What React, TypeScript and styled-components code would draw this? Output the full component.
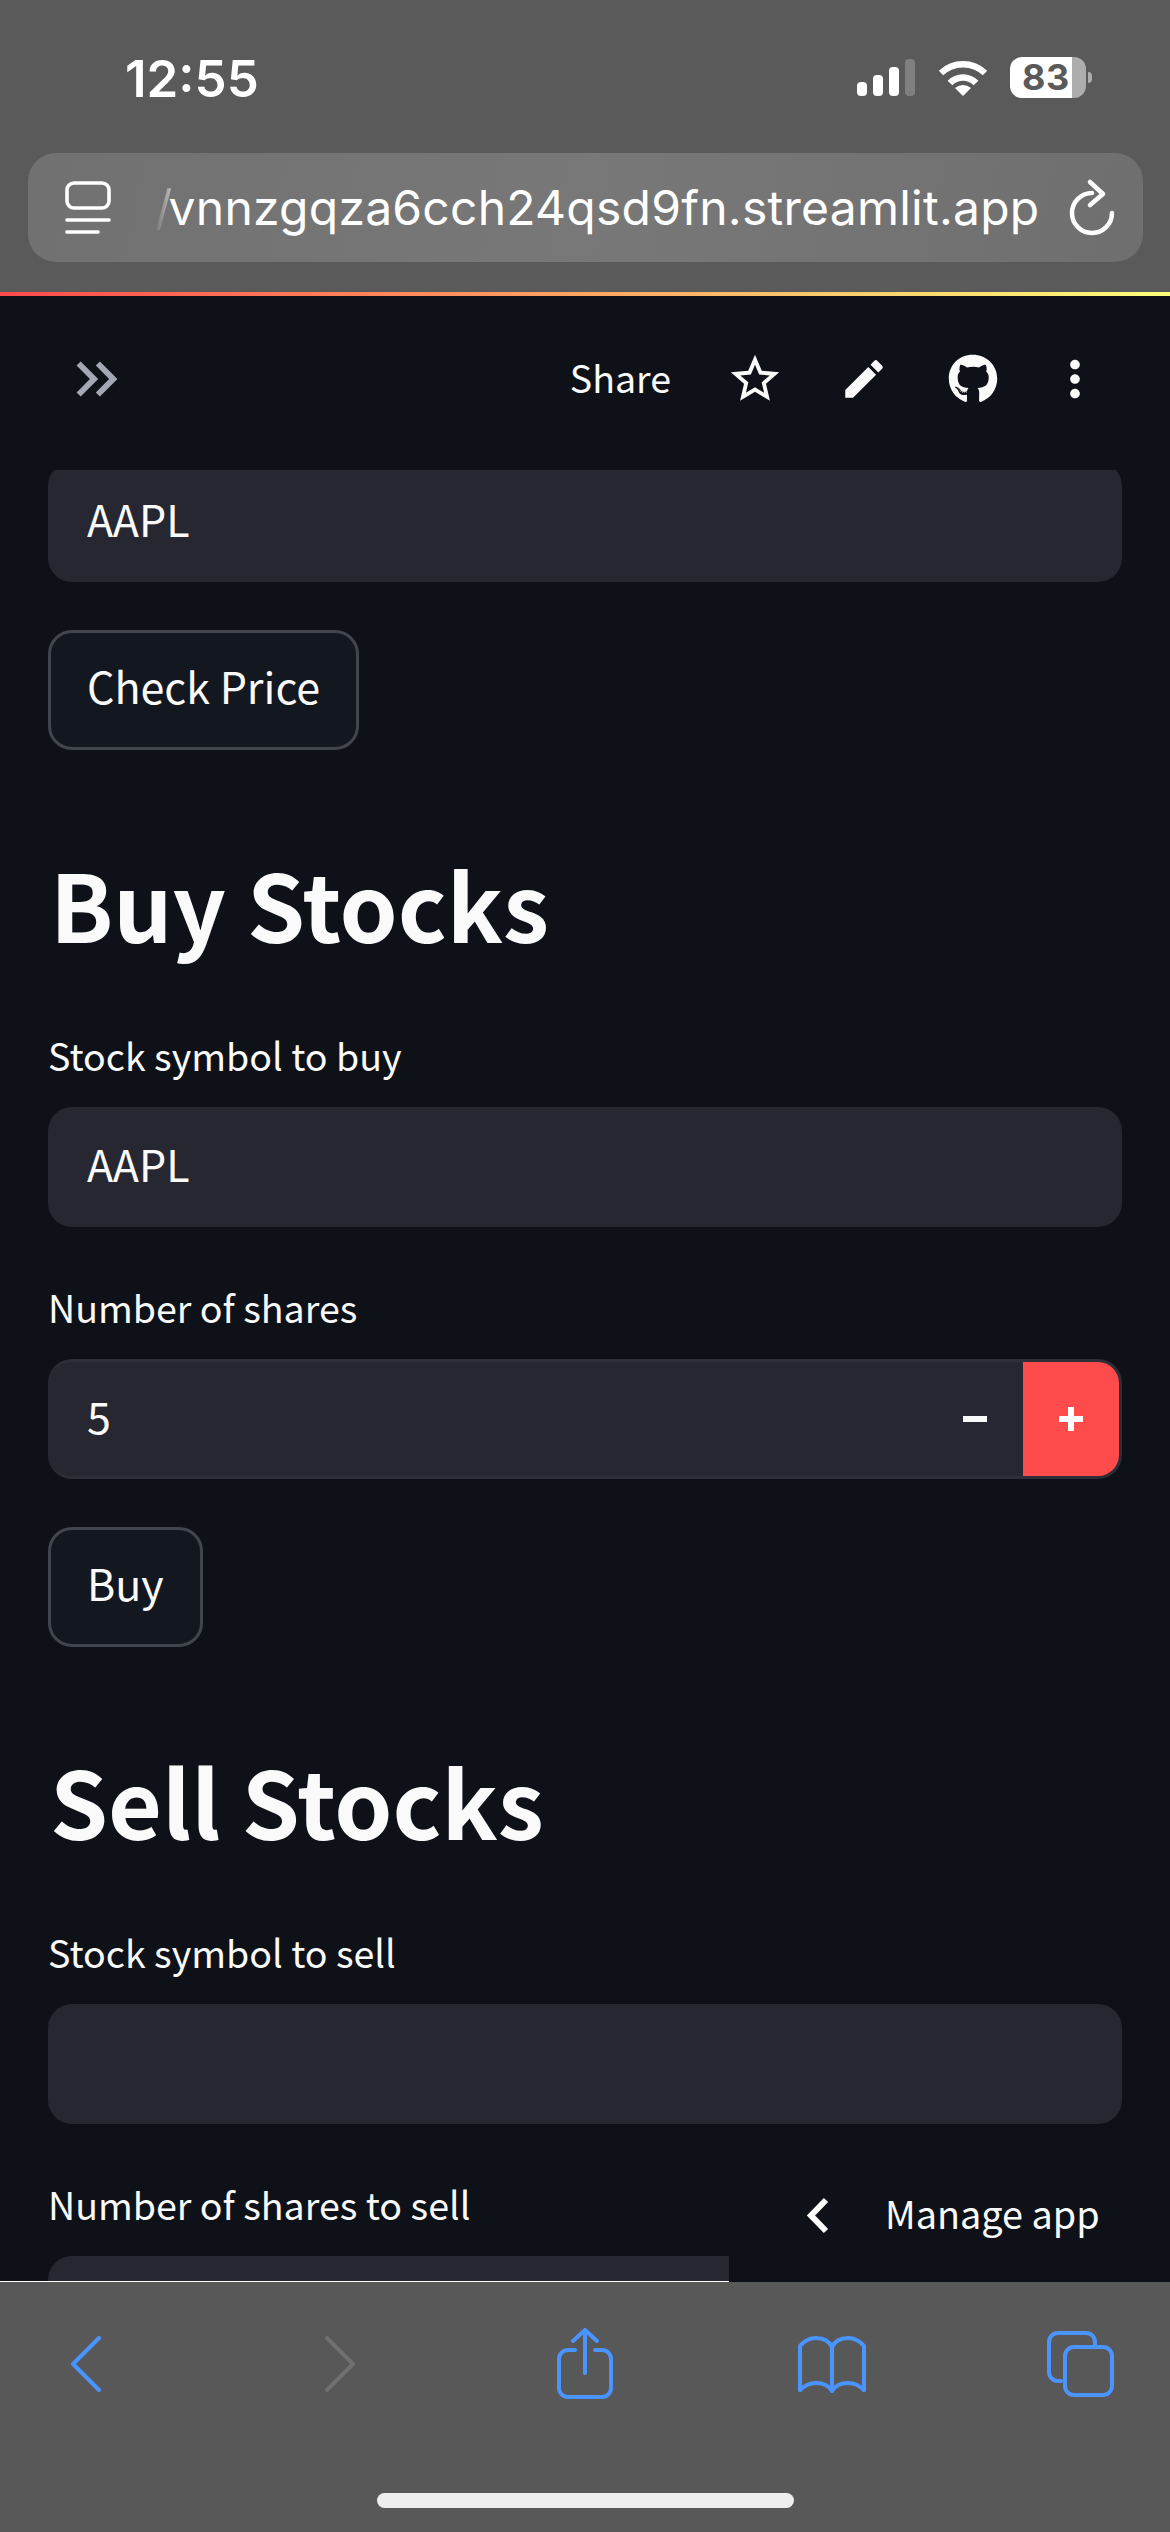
import React from "react";
import styled, { createGlobalStyle } from "styled-components";
import { MdEdit, MdKeyboardDoubleArrowRight, MdMoreVert, MdStarBorder } from "react-icons/md";
import { FaGithub } from "react-icons/fa";

const GlobalStyle = createGlobalStyle`
  html, body { margin: 0; padding: 0; background: #0e1117; }
  * { box-sizing: border-box; }
`;

const Page = styled.div`
  width: 1170px;
  height: 2532px;
  display: flex;
  flex-direction: column;
  overflow: hidden;
  background: #0e1117;
  color: #fafafa;
  font-family: "Noto Sans CJK JP", "Liberation Sans", sans-serif;
`;

const BrowserTop = styled.header`
  flex: none;
  height: 292px;
  background: #5a5a5a;
  font-family: Inter, "Liberation Sans", sans-serif;
  color: #fff;
`;

const StatusBar = styled.div`
  height: 153px;
  padding: 57px 84px 0 125px;
  display: flex;
  justify-content: space-between;
  align-items: flex-start;
`;

const Clock = styled.div`
  margin-top: 1px;
  font-size: 51px;
  line-height: 41px;
  font-weight: 600;
`;

const StatusIcons = styled.div`
  display: flex;
  align-items: center;
  height: 41px;
`;

const SignalIcon = styled.svg`
  width: 58px;
  height: 37px;
  margin-right: 23px;
`;

const WifiIcon = styled.svg`
  width: 50px;
  height: 37px;
  margin-right: 22px;
`;

const Battery = styled.div`
  position: relative;
  width: 76px;
  height: 41px;
  border-radius: 12px;
  background: linear-gradient(90deg, #fff 0 62px, #adadad 62px);
  color: #5a5a5a;
  font-size: 36px;
  font-weight: 700;
  line-height: 41px;
  padding-left: 12px;
  letter-spacing: 0.5px;
  &::after {
    content: "";
    position: absolute;
    left: 78px;
    top: 15px;
    width: 4px;
    height: 11px;
    border-radius: 0 6px 6px 0;
    background: #adadad;
  }
`;

const AddressBar = styled.div`
  height: 109px;
  margin: 0 27px 0 28px;
  border-radius: 28px;
  background: linear-gradient(100deg, #717171, #787878 50%, #6f6f6f);
  display: flex;
  align-items: center;
  padding: 0 26px 0 37px;
`;

const SiteIcon = styled.svg`
  width: 46px;
  height: 54px;
  margin-right: 44px;
  flex: none;
`;

const Url = styled.div`
  flex: 1;
  white-space: nowrap;
  font-size: 48px;
  line-height: 60px;
  letter-spacing: 0.25px;
`;

const UrlFade = styled.span`
  margin-right: -4px;
  background: linear-gradient(90deg, rgba(255,255,255,0.03), rgba(255,255,255,0.55));
  -webkit-background-clip: text;
  background-clip: text;
  color: transparent;
`;

const ReloadIcon = styled.svg`
  width: 50px;
  height: 60px;
  flex: none;
`;

const AccentLine = styled.div`
  flex: none;
  height: 4px;
  background: linear-gradient(90deg, #ff4b4b, #ffff7a);
`;

const AppHeader = styled.div`
  flex: none;
  height: 174px;
  display: flex;
  align-items: center;
  padding: 0 0 8px 62px;
  color: #fafafa;
`;

const SidebarToggle = styled.div`
  display: flex;
  color: #a3a8b4;
  font-size: 70px;
  margin-right: auto;
`;

const Share = styled.span`
  font-size: 37.5px;
  line-height: 50px;
  margin: 0 55px 5px 0;
`;

const ToolIcon = styled.span<{ $size: number; $gap: number }>`
  display: flex;
  font-size: ${(p) => p.$size}px;
  margin-right: ${(p) => p.$gap}px;
`;

const Main = styled.main`
  position: relative;
  flex: 1;
  min-height: 0;
  overflow: hidden;
  padding: 0 48px;
  &::after {
    content: "";
    position: absolute;
    left: 0;
    bottom: 0;
    width: 729px;
    height: 1px;
    background: #fff;
  }
`;

const Input = styled.div<{ $clipped?: boolean }>`
  height: 120px;
  margin-top: ${(p) => (p.$clipped ? "-8px" : "0")};
  border-radius: 24px;
  background: #262730;
  padding: 0 39px;
  font-size: 43px;
  line-height: 112px;
`;

const Stepper = styled.div`
  height: 120px;
  border-radius: 24px;
  background: #262730;
  border: 3px solid #2d2e37;
  border-left: 0;
  display: flex;
  align-items: stretch;
  overflow: hidden;
`;

const StepperValue = styled.div`
  flex: 1;
  padding-left: 39px;
  font-size: 43px;
  line-height: 106px;
`;

const StepButton = styled.div<{ $accent?: boolean }>`
  width: 96px;
  position: relative;
  background: ${(p) => (p.$accent ? "#ff4b4b" : "transparent")};
`;

const MinusBar = styled.i`
  position: absolute;
  left: 36px;
  top: 54px;
  width: 24px;
  height: 6px;
  background: #fafafa;
`;

const PlusBar = styled(MinusBar)`
  background: #fff;
`;

const PlusStem = styled.i`
  position: absolute;
  left: 45px;
  top: 45px;
  width: 6px;
  height: 24px;
  background: #fff;
`;

const Label = styled.div`
  height: 64px;
  margin: 48px 0 20px;
  font-size: 37.6px;
  line-height: 64px;
`;

const Button = styled.div`
  display: inline-block;
  height: 120px;
  margin-top: 48px;
  padding: 0 36px;
  border: 3px solid #43454e;
  border-radius: 24px;
  background: #13171f;
  font-size: 43px;
  line-height: 105px;
  vertical-align: top;
`;

const Heading = styled.h1`
  margin: 103px 0 0;
  height: 122px;
  padding-left: 2px;
  font-size: 93px;
  font-weight: 700;
  line-height: 100px;
  color: #fafafa;
`;

const ManagePanel = styled.div`
  position: absolute;
  right: 0;
  bottom: 0;
  width: 441px;
  height: 142px;
  background: #0e1117;
  display: flex;
  align-items: center;
  padding: 8px 0 0 77px;
  z-index: 1;
`;

const ManageChevron = styled.svg`
  width: 24px;
  height: 37px;
  margin-right: 55px;
  flex: none;
`;

const ManageText = styled.span`
  font-size: 37.8px;
  line-height: 37px;
  margin-bottom: 6px;
`;

const BrowserBottom = styled.footer`
  flex: none;
  height: 250px;
  background: #585858;
  display: flex;
  flex-direction: column;
  align-items: center;
`;

const Toolbar = styled.nav`
  align-self: flex-start;
  height: 164px;
  width: 1243px;
  margin-left: -38px;
  display: grid;
  grid-template-columns: repeat(5, 248.5px);
  justify-items: center;
  align-items: center;
`;

const ToolbarIcon = styled.svg<{ $w: number; $h: number; $off?: boolean; $nudge?: number }>`
  width: ${(p) => p.$w}px;
  height: ${(p) => p.$h}px;
  margin-left: ${(p) => p.$nudge ?? 0}px;
  fill: none;
  stroke: ${(p) => (p.$off ? "#6f6f6f" : "#4a94ff")};
  stroke-width: 4;
  stroke-linecap: round;
  stroke-linejoin: round;
`;

const HomeBar = styled.div`
  width: 417px;
  height: 15px;
  margin-top: 47px;
  border-radius: 8px;
  background: #eeeeee;
`;

export default function App() {
  return (
    <Page>
      <GlobalStyle />
      <BrowserTop>
        <StatusBar>
          <Clock>12:55</Clock>
          <StatusIcons>
            <SignalIcon viewBox="0 0 58 37">
              <rect x="0" y="23" width="10" height="14" rx="4" fill="#fff" />
              <rect x="16" y="16" width="10" height="21" rx="4" fill="#fff" />
              <rect x="32" y="8" width="10" height="29" rx="4" fill="#fff" />
              <rect x="48" y="0" width="10" height="37" rx="4" fill="#808080" />
            </SignalIcon>
            <WifiIcon viewBox="0 0 50 37">
              <path d="M3 14 A32 32 0 0 1 47 14" fill="none" stroke="#fff" strokeWidth="6.5" />
              <path d="M12 24 A18 18 0 0 1 38 24" fill="none" stroke="#fff" strokeWidth="6.5" />
              <path d="M25 37 L17 29 Q25 23 33 29 Z" fill="#fff" />
            </WifiIcon>
            <Battery>83</Battery>
          </StatusIcons>
        </StatusBar>
        <AddressBar>
          <SiteIcon viewBox="0 0 46 54" fill="none" stroke="#fff" strokeWidth="3.6" strokeLinecap="round">
            <rect x="2" y="2" width="42" height="25" rx="7" />
            <path d="M2 39 H44 M2 51 H33" />
          </SiteIcon>
          <Url>
            <UrlFade>/</UrlFade>vnnzgqza6cch24qsd9fn.streamlit.app
          </Url>
          <ReloadIcon viewBox="0 0 50 60" fill="none" stroke="#fff" strokeWidth="4.5" strokeLinecap="round" strokeLinejoin="round">
            <path d="M25 15 A20 20 0 1 0 45 35" />
            <path d="M23 4 L36 16 L23 27" />
          </ReloadIcon>
        </AddressBar>
      </BrowserTop>
      <AccentLine />
      <AppHeader>
        <SidebarToggle>
          <MdKeyboardDoubleArrowRight />
        </SidebarToggle>
        <Share>Share</Share>
        <ToolIcon $size={58} $gap={55}><MdStarBorder /></ToolIcon>
        <ToolIcon $size={50} $gap={59}><MdEdit /></ToolIcon>
        <ToolIcon $size={50} $gap={48}><FaGithub /></ToolIcon>
        <ToolIcon $size={58} $gap={66}><MdMoreVert /></ToolIcon>
      </AppHeader>
      <Main>
        <Input $clipped>AAPL</Input>
        <Button>Check Price</Button>
        <Heading>Buy Stocks</Heading>
        <Label>Stock symbol to buy</Label>
        <Input>AAPL</Input>
        <Label>Number of shares</Label>
        <Stepper>
          <StepperValue>5</StepperValue>
          <StepButton><MinusBar /></StepButton>
          <StepButton $accent><PlusBar /><PlusStem /></StepButton>
        </Stepper>
        <Button>Buy</Button>
        <Heading>Sell Stocks</Heading>
        <Label>Stock symbol to sell</Label>
        <Input />
        <Label>Number of shares to sell</Label>
        <Input />
        <ManagePanel>
          <ManageChevron viewBox="0 0 24 37" fill="none" stroke="#fff" strokeWidth="6" strokeLinejoin="miter">
            <path d="M20 3 L5 18.5 L20 34" />
          </ManageChevron>
          <ManageText>Manage app</ManageText>
        </ManagePanel>
      </Main>
      <BrowserBottom>
        <Toolbar>
          <ToolbarIcon $w={32} $h={56} viewBox="0 0 32 56"><path d="M29 2 L3 28 L29 54" /></ToolbarIcon>
          <ToolbarIcon $w={32} $h={56} $off $nudge={11} viewBox="0 0 32 56"><path d="M3 2 L29 28 L3 54" /></ToolbarIcon>
          <ToolbarIcon $w={56} $h={72} $nudge={4} viewBox="0 0 56 72">
            <path d="M18 22 H11 a9 9 0 0 0 -9 9 V60 a9 9 0 0 0 9 9 H45 a9 9 0 0 0 9 -9 V31 a9 9 0 0 0 -9 -9 H38" />
            <path d="M28 45 V2 M16 13 L28 2 L40 13" />
          </ToolbarIcon>
          <ToolbarIcon $w={70} $h={59} viewBox="0 0 70 59">
            <path d="M3 55 V11 C8 5 14 3 19 3 C26 3 32 6 35 12 C38 6 44 3 51 3 C56 3 62 5 67 11 V55" />
            <path d="M3 55 C8 50 14 48 19 48 C26 48 32 51 35 56 C38 51 44 48 51 48 C56 48 62 50 67 55" />
            <path d="M35 12 V56" />
          </ToolbarIcon>
          <ToolbarIcon $w={67} $h={66} viewBox="0 0 67 66">
            <path d="M14 50 H11 a9 9 0 0 1 -9 -9 V11 a9 9 0 0 1 9 -9 H39 a9 9 0 0 1 9 9 V14" />
            <rect x="18" y="16" width="47" height="48" rx="9" />
          </ToolbarIcon>
        </Toolbar>
        <HomeBar />
      </BrowserBottom>
    </Page>
  );
}
